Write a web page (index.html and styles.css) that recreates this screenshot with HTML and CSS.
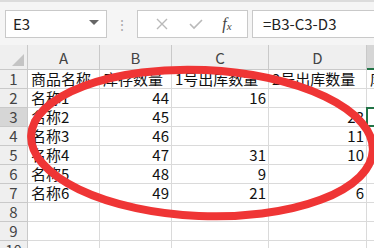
FILE: index.html
```html
<!DOCTYPE html>
<html>
  <head>
    <title>Sheet</title>
    <link rel="stylesheet" href="styles.css">
  </head>
  <body>
  <div class="app">
    <div class="toolbar">
      <div class="namebox">
        <span>E3</span>
        <span class="caret"></span>
      </div>
      <div class="dots">⋮</div>
      <div class="buttons">
        <svg class="ico" width="14" height="14" viewBox="0 0 14 14"><path d="M2 2 L12 12 M12 2 L2 12" stroke="#b9b9b9" stroke-width="1.4" fill="none"/></svg>
        <svg class="ico" width="16" height="14" viewBox="0 0 16 14"><path d="M2 7 L6 11 L14 3" stroke="#b9b9b9" stroke-width="1.6" fill="none"/></svg>
        <span class="fx">f<sub>x</sub></span>
      </div>
      <div class="formula">=B3-C3-D3</div>
    </div>

    <div class="sheet">
      <div class="corner"><span class="tri"></span></div>
      <div class="colhead">A</div>
      <div class="colhead">B</div>
      <div class="colhead">C</div>
      <div class="colhead">D</div>
      <div class="colhead active">E</div>

      <div class="rowhead">1</div>
      <div class="cell">商品名称</div>
      <div class="cell">库存数量</div>
      <div class="cell">1号出库数量</div>
      <div class="cell">2号出库数量</div>
      <div class="cell">库</div>

      <div class="rowhead">2</div>
      <div class="cell">名称1</div>
      <div class="cell num">44</div>
      <div class="cell num">16</div>
      <div class="cell num"></div>
      <div class="cell"></div>

      <div class="rowhead active">3</div>
      <div class="cell">名称2</div>
      <div class="cell num">45</div>
      <div class="cell num"></div>
      <div class="cell num">23</div>
      <div class="cell selected"></div>

      <div class="rowhead">4</div>
      <div class="cell">名称3</div>
      <div class="cell num">46</div>
      <div class="cell num"></div>
      <div class="cell num">11</div>
      <div class="cell"></div>

      <div class="rowhead">5</div>
      <div class="cell">名称4</div>
      <div class="cell num">47</div>
      <div class="cell num">31</div>
      <div class="cell num">10</div>
      <div class="cell"></div>

      <div class="rowhead">6</div>
      <div class="cell">名称5</div>
      <div class="cell num">48</div>
      <div class="cell num">9</div>
      <div class="cell num"></div>
      <div class="cell"></div>

      <div class="rowhead">7</div>
      <div class="cell">名称6</div>
      <div class="cell num">49</div>
      <div class="cell num">21</div>
      <div class="cell num">6</div>
      <div class="cell"></div>

      <div class="rowhead">8</div>
      <div class="cell"></div><div class="cell"></div><div class="cell"></div><div class="cell"></div><div class="cell"></div>

      <div class="rowhead">9</div>
      <div class="cell"></div><div class="cell"></div><div class="cell"></div><div class="cell"></div><div class="cell"></div>

      <div class="rowhead">10</div>
      <div class="cell"></div><div class="cell"></div><div class="cell"></div><div class="cell"></div><div class="cell"></div>
    </div>

    <!-- hand-drawn red circle over the data -->
    <svg class="mark" width="374" height="248" viewBox="0 0 374 248">
      <ellipse cx="202" cy="143" rx="171" ry="73" transform="rotate(2.5 202 143)" fill="none" stroke="#ef3535" stroke-width="8"/>
    </svg>
  </div>
  </body>
</html>
```

FILE: styles.css
```css
html, body {
	margin: 0;
	padding: 0;
}
body {
	font-family: "Noto Sans CJK SC", "Noto Sans", sans-serif;
	background: #fff;
	overflow: hidden;
}
.app {
	position: relative;
	width: 374px;
	height: 248px;
	overflow: hidden;
}

/* formula bar */
.toolbar {
	display: flex;
	align-items: center;
	height: 45px;
	padding: 0 0 0 5px;
	box-sizing: border-box;
	background: #f5f5f5;
	border-top: 2px solid #dcdcdc;
}
.namebox {
	width: 102px;
	height: 28px;
	box-sizing: border-box;
	background: #fff;
	border: 1px solid #c9c9c9;
	display: flex;
	align-items: center;
	justify-content: space-between;
	padding: 0 7px 0 7px;
	font-size: 15px;
	color: #222;
}
.caret {
	width: 0;
	height: 0;
	border-left: 5px solid transparent;
	border-right: 5px solid transparent;
	border-top: 5px solid #666;
	margin-top: -2px;
}
.dots {
	width: 30px;
	text-align: center;
	color: #aaa;
	font-size: 14px;
}
.buttons {
	width: 111px;
	height: 28px;
	box-sizing: border-box;
	background: #fff;
	border: 1px solid #c9c9c9;
	display: flex;
	align-items: center;
	justify-content: space-around;
	padding: 0 6px 0 8px;
}
.fx {
	font-family: "Liberation Serif", serif;
	font-style: italic;
	font-size: 16px;
	color: #444;
}
.fx sub {
	font-size: 11px;
	vertical-align: -1px;
}
.formula {
	flex: 1;
	height: 28px;
	margin-left: 4px;
	box-sizing: border-box;
	background: #fff;
	border: 1px solid #c9c9c9;
	border-right: none;
	padding-left: 10px;
	line-height: 26px;
	font-size: 15px;
	color: #222;
}

/* grid */
.sheet {
	display: grid;
	grid-template-columns: 28px 72px 72px 97px 98px 60px;
	grid-template-rows: 25px;
	grid-auto-rows: 19px;
	background: #fff;
	font-size: 15px;
	line-height: 18px;
}
.corner, .colhead, .rowhead {
	background: #efefef;
	border-right: 1px solid #c9c9c9;
	border-bottom: 1px solid #c9c9c9;
	color: #444;
	box-sizing: border-box;
}
.corner {
	position: relative;
}
.tri {
	position: absolute;
	right: 3px;
	bottom: 3px;
	width: 0;
	height: 0;
	border-left: 12px solid transparent;
	border-bottom: 12px solid #c4c4c4;
}
.colhead {
	text-align: center;
	line-height: 24px;
	padding-top: 1px;
}
.colhead.active {
	background: #d6d6d6;
	border-bottom: 2px solid #217346;
}
.rowhead {
	text-align: center;
}
.rowhead.active {
	background: #d6d6d6;
}
.cell {
	border-right: 1px solid #dadada;
	border-bottom: 1px solid #dadada;
	box-sizing: border-box;
	padding: 0 2px 0 3px;
	white-space: nowrap;
	color: #111;
}
.num {
	text-align: right;
}
.cell.selected {
	border: 2px solid #217346;
	margin: -1px 0 0 -1px;
}

.mark {
	position: absolute;
	left: 0;
	top: 0;
}
```
